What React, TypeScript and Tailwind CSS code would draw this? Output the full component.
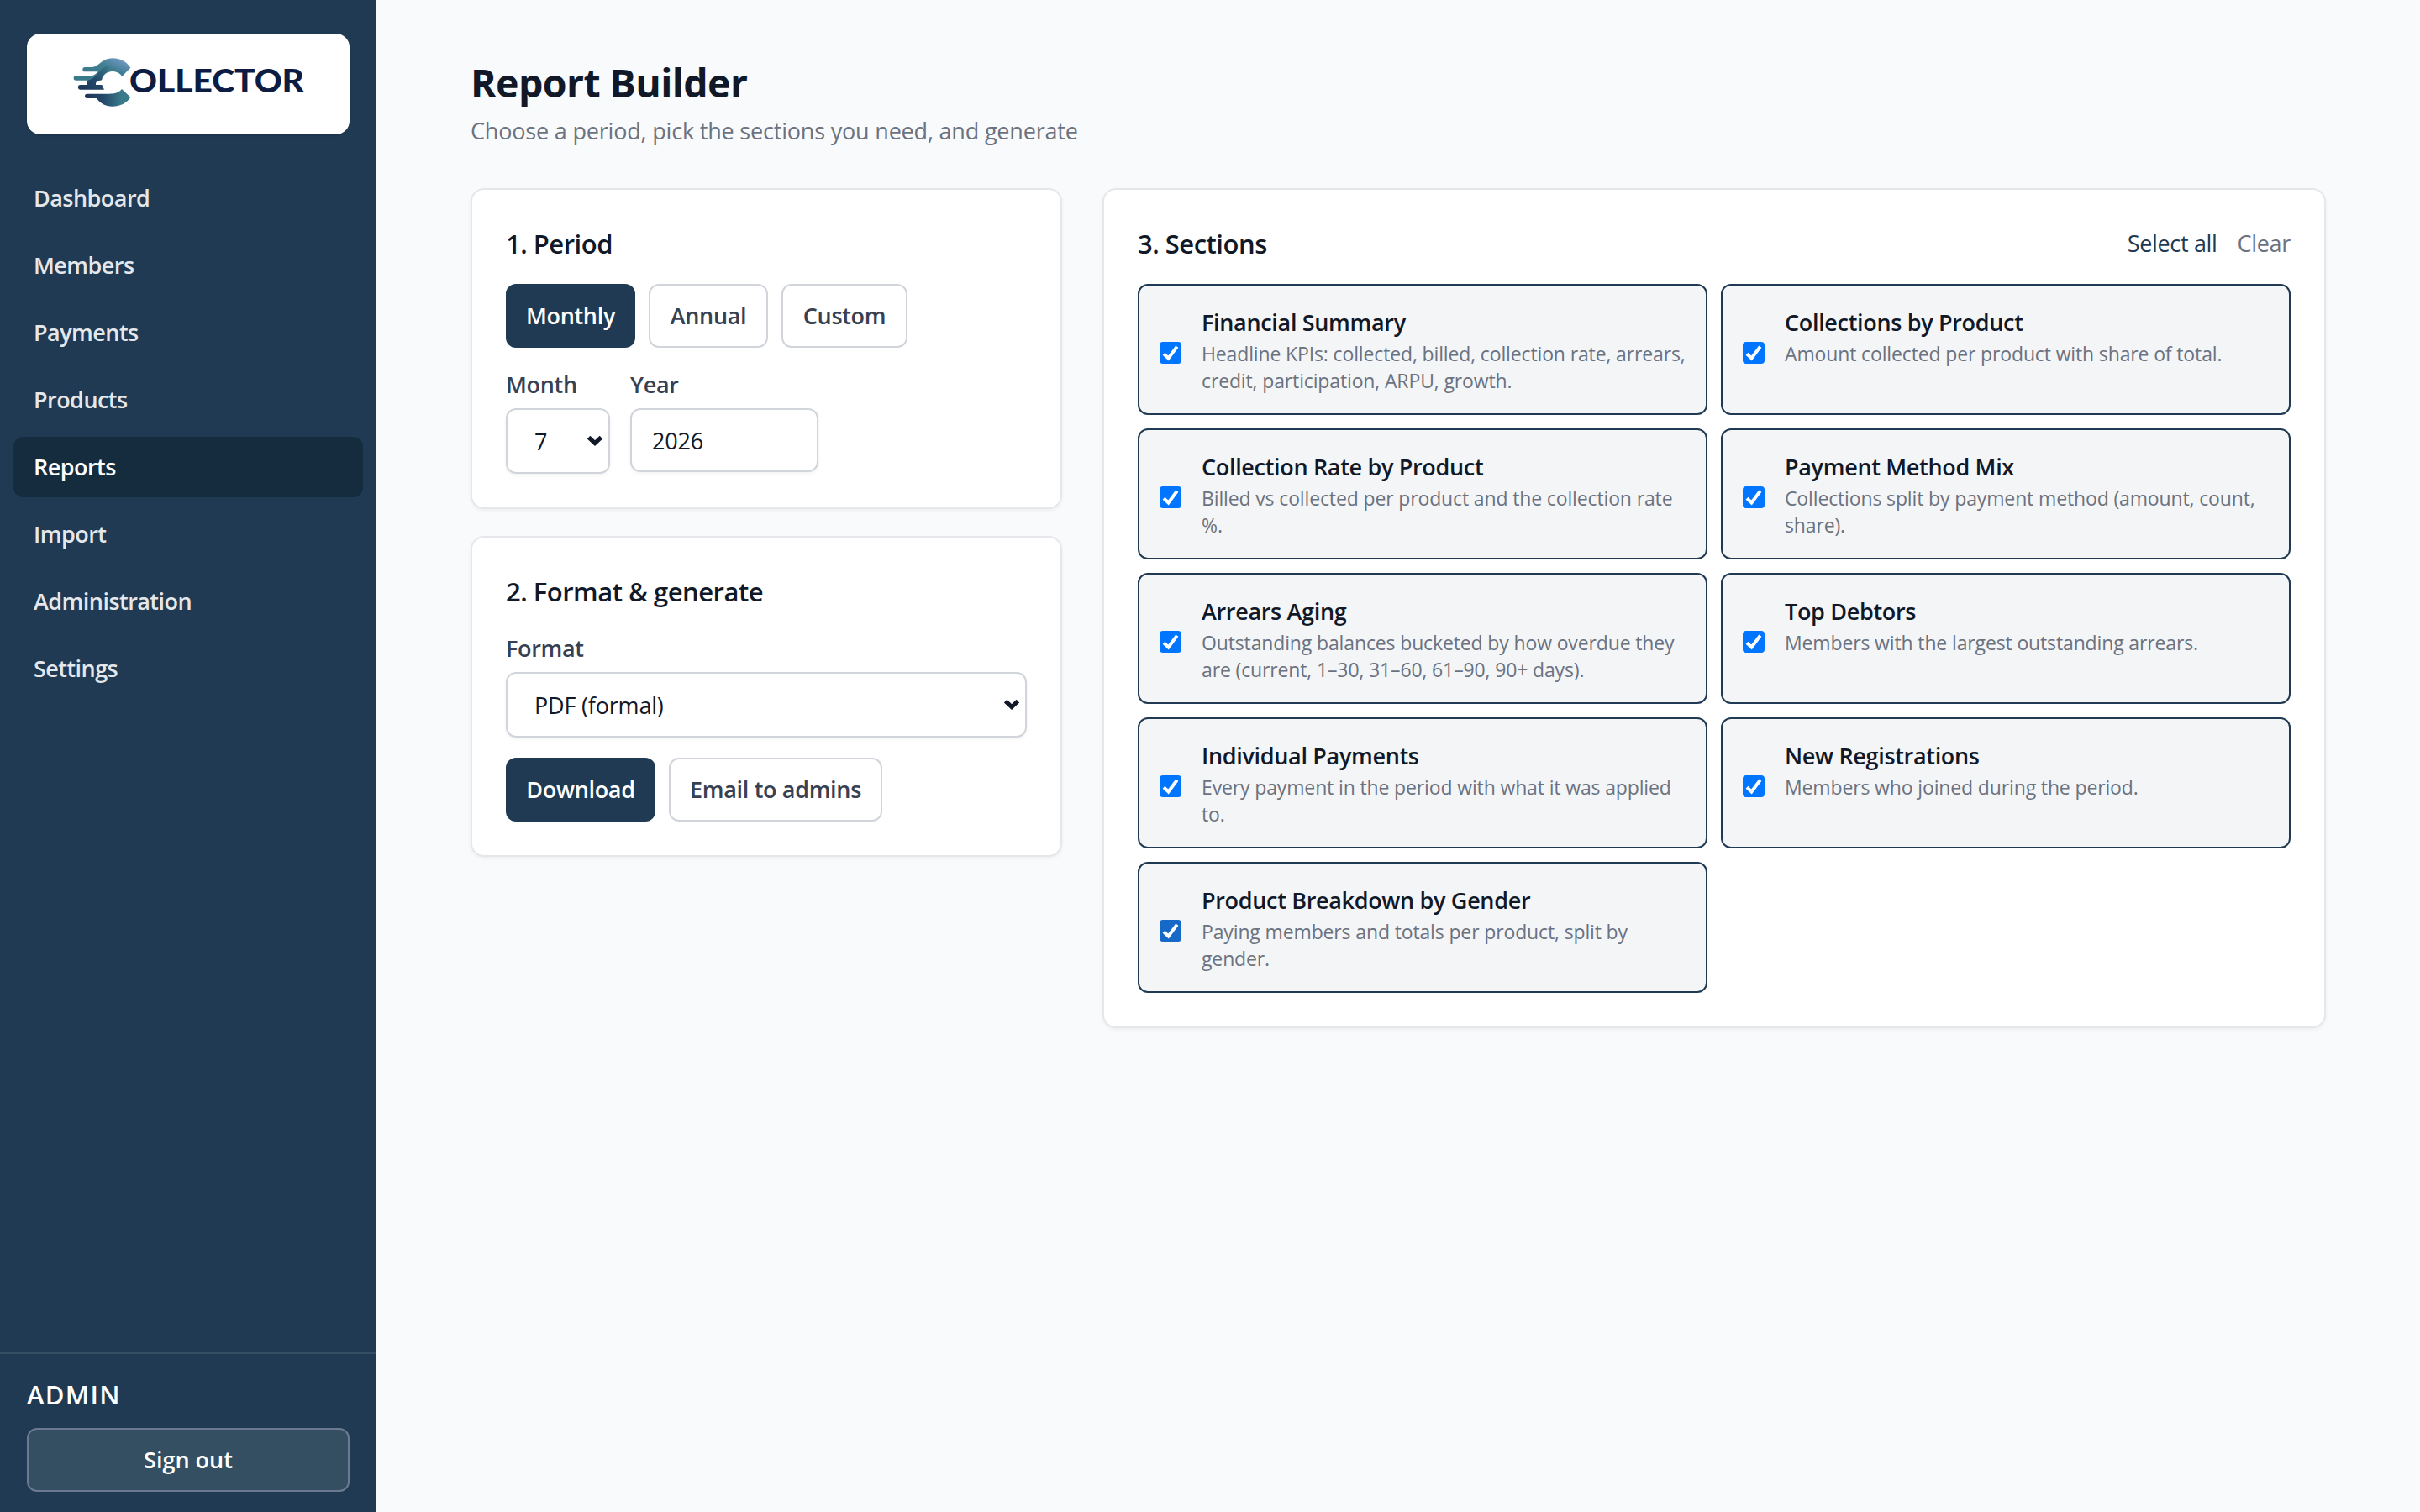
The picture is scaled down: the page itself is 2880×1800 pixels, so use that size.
import { useState } from 'react'

const NAV_ITEMS = ['Dashboard', 'Members', 'Payments', 'Products', 'Reports', 'Import', 'Administration', 'Settings']

interface Section {
  id: string
  title: string
  description: string
}

const SECTIONS: Section[] = [
  { id: 'summary', title: 'Financial Summary', description: 'Headline KPIs: collected, billed, collection rate, arrears, credit, participation, ARPU, growth.' },
  { id: 'by_product', title: 'Collections by Product', description: 'Amount collected per product with share of total.' },
  { id: 'rate', title: 'Collection Rate by Product', description: 'Billed vs collected per product and the collection rate %.' },
  { id: 'methods', title: 'Payment Method Mix', description: 'Collections split by payment method (amount, count, share).' },
  { id: 'aging', title: 'Arrears Aging', description: 'Outstanding balances bucketed by how overdue they are (current, 1–30, 31–60, 61–90, 90+ days).' },
  { id: 'debtors', title: 'Top Debtors', description: 'Members with the largest outstanding arrears.' },
  { id: 'payments', title: 'Individual Payments', description: 'Every payment in the period with what it was applied to.' },
  { id: 'registrations', title: 'New Registrations', description: 'Members who joined during the period.' },
  { id: 'gender', title: 'Product Breakdown by Gender', description: 'Paying members and totals per product, split by gender.' },
]

const ALL_IDS = SECTIONS.map(s => s.id)

function Logo() {
  return (
    <svg viewBox="32 40 384 120" className="block w-full h-full">
      <defs>
        <linearGradient id="swooshTop" x1="0.1" y1="0.8" x2="0.9" y2="0.1">
          <stop offset="0" stopColor="#3a7a8a" />
          <stop offset="0.6" stopColor="#3f7d90" />
          <stop offset="1" stopColor="#7399c6" />
        </linearGradient>
        <linearGradient id="swooshMid" x1="0" y1="1" x2="1" y2="0">
          <stop offset="0" stopColor="#1c3657" />
          <stop offset="0.5" stopColor="#24496a" />
          <stop offset="1" stopColor="#3a7a8a" />
        </linearGradient>
        <linearGradient id="swooshLow" x1="0" y1="0" x2="1" y2="0">
          <stop offset="0" stopColor="#1c3657" />
          <stop offset="0.4" stopColor="#23496a" />
          <stop offset="0.8" stopColor="#3a7a8a" />
        </linearGradient>
      </defs>
      <g transform="translate(80 60) scale(0.33333)">
        <path d="M63 60H88C112 60 122 29 162 28C190 28 212 40 226 62L196 92C186 80 174 75 160 75C144 76 134 84 128 94L96 107H31A8 8 0 0 1 31 91H84C96 90 104 84 110 76H63A8 8 0 0 1 63 60Z" fill="url(#swooshTop)" />
        <path d="M146 56C128 58 116 72 104 88C96 98 88 104 72 107V123H47A8.500 8.500 0 0 0 47 140H132L124 123H102V118C104 110 116 108 124 106C125 92 134 78 148 75Z" fill="url(#swooshMid)" />
        <path d="M71 155H150C170 155 184 152 195 138L226 167C212 188 190 200 160 200C138 200 118 190 105 171H71A8 8 0 0 1 71 155Z" fill="url(#swooshLow)" />
      </g>
      <text x="154" y="110" textLength="208" lengthAdjust="spacingAndGlyphs" fill="#0c1c42" className="font-['Lato'] text-[37px] font-black">
        OLLECTOR
      </text>
    </svg>
  )
}

function Chevron() {
  return (
    <svg viewBox="0 0 20 14" className="absolute right-2 top-8 w-5 h-3.5 pointer-events-none">
      <path d="M2.600 2.600L10 9.600L17.400 2.600" fill="none" stroke="#111827" strokeWidth="5" />
    </svg>
  )
}

function Checkbox({ checked, hovered }: { checked: boolean; hovered: boolean }) {
  if (!checked) {
    return <span className="w-[26px] h-[26px] mt-2 shrink-0 self-center rounded-[4px] border-2 border-[#767676] bg-white" />
  }
  return (
    <span className={`w-[26px] h-[26px] mt-2 shrink-0 self-center rounded-[4px] ${hovered ? 'bg-[#1669c7]' : 'bg-[#0075ff]'}`}>
      <svg viewBox="0 0 26 26" className="block w-full h-full">
        <path d="M5 14.300L10.500 19.500L20.800 5.600" fill="none" stroke="#fff" strokeWidth="4" />
      </svg>
    </span>
  )
}

function Sidebar() {
  return (
    <aside className="w-[448px] shrink-0 flex flex-col bg-[#1f3a52]">
      <div className="px-8 pt-10">
        <div className="h-[120px] rounded-2xl bg-white shadow-sm">
          <Logo />
        </div>
      </div>
      <nav className="flex-1 flex flex-col gap-2 px-4 pt-10">
        {NAV_ITEMS.map(item => (
          <a
            key={item}
            className={`h-[72px] px-6 flex items-center rounded-xl text-[27px] font-[580] tracking-[-0.02em] ${
              item === 'Reports' ? 'bg-[#152b3e] text-white' : 'text-[#e5e7eb]'
            }`}
          >
            {item}
          </a>
        ))}
      </nav>
      <div className="border-t-2 border-[#344e63] px-8 py-6">
        <div className="mb-4 text-[31px] leading-[48px] font-[580] tracking-[0.04em] text-white">ADMIN</div>
        <button className="w-full h-[76px] rounded-xl border-2 border-[#6b7a90] bg-[#344f62] text-[27px] font-[580] text-white">
          Sign out
        </button>
      </div>
    </aside>
  )
}

const CARD = 'bg-white rounded-2xl border-2 border-[#e5e7eb] shadow-[0_2px_4px_rgba(0,0,0,0.05)] p-10'
const HEADING = 'text-[31px] leading-[48px] font-[560] tracking-[-0.016em] text-[#111827]'
const LABEL = 'block mb-2 text-[27px] leading-10 font-[560] tracking-[-0.012em] text-[#374151]'
const PRIMARY = 'h-[76px] rounded-xl bg-[#1f3a52] text-[27px] font-[580] tracking-[-0.012em] text-white'
const SECONDARY = 'h-[76px] rounded-xl border-2 border-[#d1d5db] bg-white text-[27px] font-[560] tracking-[-0.012em] text-[#374151]'
const FIELD = 'block w-full rounded-xl border-2 border-[#d1d5db] bg-white text-[27px] tracking-[-0.007em] text-[#111827] shadow-[0_2px_4px_rgba(0,0,0,0.05)]'

export default function App() {
  const [period, setPeriod] = useState('Monthly')
  const [month, setMonth] = useState('7')
  const [year, setYear] = useState('2026')
  const [format, setFormat] = useState('pdf')
  const [selected, setSelected] = useState<string[]>(ALL_IDS)

  const toggle = (id: string) => {
    setSelected(prev => (prev.includes(id) ? prev.filter(s => s !== id) : [...prev, id]))
  }

  return (
    <div className="flex h-[1800px] bg-[#f9fafc] font-['Open_Sans','Noto_Sans',sans-serif]">
      <Sidebar />

      <main className="flex-1 px-28 pt-[68px]">
        <h1 className="text-[46.5px] leading-[60px] font-bold tracking-[-0.013em] text-[#111827]">Report Builder</h1>
        <p className="mt-2 text-[27px] leading-10 tracking-[-0.007em] text-[#6b7280]">
          Choose a period, pick the sections you need, and generate
        </p>

        <div className="mt-12 flex items-start gap-12">
          <div className="w-[704px] shrink-0 flex flex-col gap-8">
            <div className={CARD}>
              <h2 className={HEADING}>1. Period</h2>
              <div className="mt-6 flex gap-4">
                <button onClick={() => setPeriod('Monthly')} className={`w-[154px] ${period === 'Monthly' ? PRIMARY : SECONDARY}`}>
                  Monthly
                </button>
                <button onClick={() => setPeriod('Annual')} className={`w-[142px] ${period === 'Annual' ? PRIMARY : SECONDARY}`}>
                  Annual
                </button>
                <button onClick={() => setPeriod('Custom')} className={`w-[150px] ${period === 'Custom' ? PRIMARY : SECONDARY}`}>
                  Custom
                </button>
              </div>
              <div className="mt-6 flex items-start gap-6">
                <div className="w-[124px]">
                  <label className={LABEL}>Month</label>
                  <div className="relative">
                    <select value={month} onChange={e => setMonth(e.target.value)} className={`${FIELD} h-[78px] appearance-none pl-8 pt-0.5`}>
                      {['1', '2', '3', '4', '5', '6', '7', '8', '9', '10', '11', '12'].map(m => (
                        <option key={m} value={m}>{m}</option>
                      ))}
                    </select>
                    <Chevron />
                  </div>
                </div>
                <div className="w-[224px]">
                  <label className={LABEL}>Year</label>
                  <input value={year} onChange={e => setYear(e.target.value)} className={`${FIELD} h-[76px] px-6`} />
                </div>
              </div>
            </div>

            <div className={CARD}>
              <h2 className={HEADING}>2. Format &amp; generate</h2>
              <div className="mt-6">
                <label className={LABEL}>Format</label>
                <div className="relative">
                  <select value={format} onChange={e => setFormat(e.target.value)} className={`${FIELD} h-[78px] appearance-none pl-8 pt-0.5`}>
                    <option value="pdf">PDF (formal)</option>
                    <option value="xlsx">Excel</option>
                  </select>
                  <Chevron />
                </div>
              </div>
              <div className="mt-6 flex gap-4">
                <button className={`w-[178px] ${PRIMARY}`}>Download</button>
                <button className={`w-[254px] ${SECONDARY}`}>Email to admins</button>
              </div>
            </div>
          </div>

          <div className={`flex-1 ${CARD}`}>
            <div className="flex items-center justify-between">
              <h2 className={HEADING}>3. Sections</h2>
              <div className="flex gap-6 text-[27px] tracking-[-0.012em]">
                <button onClick={() => setSelected(ALL_IDS)} className="text-[#1f3a52]">Select all</button>
                <button onClick={() => setSelected([])} className="text-[#6b7280]">Clear</button>
              </div>
            </div>
            <div className="mt-6 grid grid-cols-2 gap-4">
              {SECTIONS.map(s => {
                const checked = selected.includes(s.id)
                return (
                  <div
                    key={s.id}
                    onClick={() => toggle(s.id)}
                    className={`h-[156px] flex items-start gap-6 rounded-xl border-2 py-6 pl-6 pr-5 ${
                      checked ? 'border-[#1f3a52] bg-[#f3f5f7]' : 'border-[#e5e7eb] bg-white'
                    }`}
                  >
                    <Checkbox checked={checked} hovered={s.id === 'gender'} />
                    <div className="flex-1 min-w-0">
                      <div className="text-[27px] leading-10 font-[560] tracking-[-0.012em] text-[#111827]">{s.title}</div>
                      <div className="mt-px text-[23px] leading-8 tracking-[-0.006em] text-[#6b7280]">{s.description}</div>
                    </div>
                  </div>
                )
              })}
            </div>
          </div>
        </div>
      </main>
    </div>
  )
}
